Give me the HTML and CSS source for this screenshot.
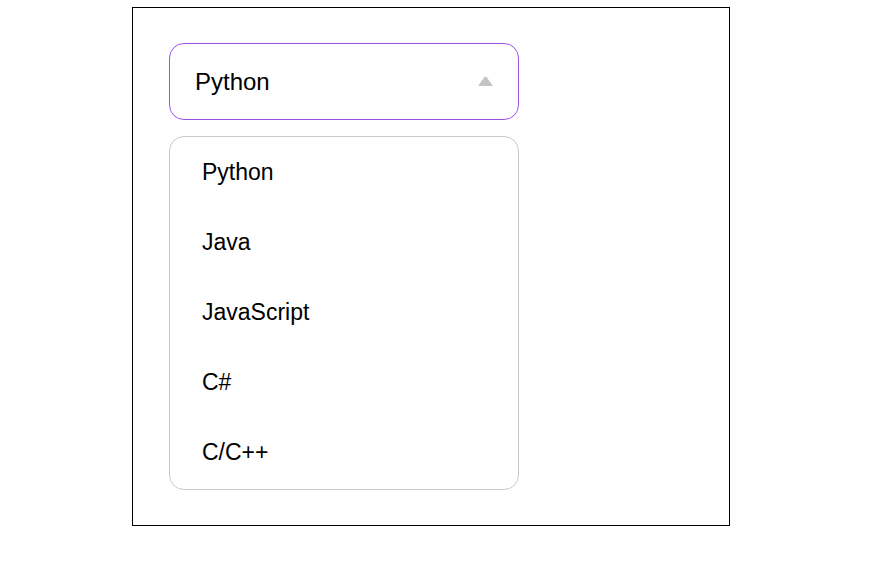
FILE: index.html
```html
<!DOCTYPE html>
<html>
<head>
<meta charset="utf-8">
<link rel="stylesheet" href="styles.css">
</head>
<body>
<div class="frame">
  <div class="select">
    <span class="value">Python</span>
    <svg class="arrow" width="15" height="10" viewBox="0 0 15 10"><path d="M6.3 1.2 Q7.5 -0.2 8.7 1.2 L15 10 L0 10 Z" fill="#c4c4c4"/></svg>
  </div>
  <ul class="menu">
    <li class="item">Python</li>
    <li class="item">Java</li>
    <li class="item">JavaScript</li>
    <li class="item">C#</li>
    <li class="item">C/C++</li>
  </ul>
</div>
</body>
</html>
```
FILE: styles.css
```css
html, body {
  margin: 0;
  padding: 0;
  background: #ffffff;
}
body {
  font-family: "Liberation Sans", Arial, sans-serif;
  color: #000;
}
.frame {
  box-sizing: border-box;
  margin: 7px 0 0 132px;
  width: 598px;
  height: 519px;
  border: 1px solid #000;
  padding: 35px 36px 35px 36px;
}
.select {
  box-sizing: border-box;
  width: 350px;
  height: 77px;
  border: 1px solid #9d52e6;
  border-radius: 15px;
  display: flex;
  align-items: center;
  justify-content: space-between;
  padding: 0 25px 0 25px;
}
.value {
  font-size: 24px;
  margin-top: 1px;
}
.arrow {
  display: block;
  margin-top: -2px;
}
.menu {
  box-sizing: border-box;
  list-style: none;
  margin: 16px 0 0 0;
  padding: 0 0 2px 0;
  width: 350px;
  border: 1px solid #c8c8c8;
  border-radius: 15px;
}
.item {
  height: 70px;
  display: flex;
  align-items: center;
  padding-left: 32px;
  font-size: 23px;
}
```
